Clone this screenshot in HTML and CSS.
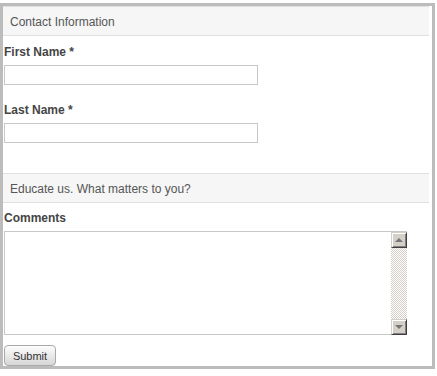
FILE: index.html
```html
<!DOCTYPE html>
<html lang="en">
<head>
    <meta charset="UTF-8">
    <meta name="viewport" content="width=device-width, initial-scale=1.0">
    <title>Contact</title>
    <link rel="stylesheet" href="styles.css">
</head>
<body>
    <form class="form-box" onsubmit="return false;">
        <div class="section-title">Contact Information</div>
        <div class="field first">
            <label for="first-name">First Name *</label>
            <input type="text" id="first-name" class="text-input">
        </div>
        <div class="field">
            <label for="last-name">Last Name *</label>
            <input type="text" id="last-name" class="text-input">
        </div>

        <div class="section-title second">Educate us. What matters to you?</div>
        <div class="field comments">
            <label for="comments">Comments</label>
            <div class="textarea-wrap">
                <textarea id="comments"></textarea>
                <!-- old style scrollbar -->
                <div class="scrollbar">
                    <div class="sb-btn up"></div>
                    <div class="sb-track"></div>
                    <div class="sb-btn down"></div>
                </div>
            </div>
        </div>
        <button type="submit" class="submit">Submit</button>
    </form>
</body>
</html>
```

FILE: styles.css
```css
body {
    margin: 0;
    padding: 0;
    font-family: "Liberation Sans", Arial, sans-serif;
    background-color: #fff;
}
.form-box {
    width: 435px;
    margin: 3px 0 0 0;
    padding: 0 3px 0 0;
    border: 3px solid #bcbcbc;
    box-sizing: border-box;
}
.section-title {
    height: 30px;
    box-sizing: border-box;
    border-top: 1px solid #e0e0e0;
    border-bottom: 1px solid #e0e0e0;
    background-color: #f6f6f6;
    padding: 2px 0 0 7px;
    font-size: 12px;
    line-height: 26px;
    color: #555;
}
.section-title.second {
    margin-top: 30px;
}
.field {
    margin-left: 1px;
}
.field label {
    display: block;
    font-size: 12px;
    font-weight: bold;
    line-height: 14px;
    color: #454545;
    margin: 18px 0 6px 0;
}
.field.first label {
    margin-top: 9px;
}
.field.comments label {
    margin-top: 8px;
    margin-bottom: 6px;
}
.text-input {
    display: block;
    width: 254px;
    height: 20px;
    box-sizing: border-box;
    margin: 0;
    padding: 2px 4px;
    border: 1px solid #c8c8c8;
    font-family: inherit;
    font-size: 12px;
    outline: none;
}
.textarea-wrap {
    display: flex;
    width: 403px;
    height: 104px;
    box-sizing: border-box;
    border: 1px solid #c8c8c8;
    border-right: none;
}
.textarea-wrap textarea {
    flex: 1;
    margin: 0;
    padding: 2px;
    border: none;
    resize: none;
    overflow: hidden;
    outline: none;
    font-family: inherit;
    font-size: 12px;
}
.scrollbar {
    width: 16px;
    display: flex;
    flex-direction: column;
    margin: 0 0 -1px 0;
}
.sb-btn {
    position: relative;
    height: 16px;
    box-sizing: border-box;
    background-color: #d4d0c8;
    border: 1px solid;
    border-color: #d4d0c8 #404040 #404040 #d4d0c8;
    box-shadow: inset 1px 1px #fff, inset -1px -1px #808080;
}
.sb-btn::after {
    content: "";
    position: absolute;
    left: 3px;
    width: 0;
    height: 0;
    border-left: 4px solid transparent;
    border-right: 4px solid transparent;
}
.sb-btn.up::after {
    top: 5px;
    border-bottom: 4px solid #777;
}
.sb-btn.down::after {
    top: 5px;
    border-top: 4px solid #777;
}
.sb-track {
    flex: 1;
    background-image: repeating-conic-gradient(#d4d0c8 0 25%, #fff 0 50%);
    background-size: 2px 2px;
}
.submit {
    display: block;
    width: 52px;
    height: 21px;
    margin: 10px 0 0 1px;
    padding: 0;
    border: 1px solid #a9a9a9;
    border-radius: 4px;
    background: linear-gradient(#fdfdfd, #e6e6e6 60%, #d6d6d6);
    font-family: inherit;
    font-size: 11px;
    color: #333;
    cursor: pointer;
}
```
